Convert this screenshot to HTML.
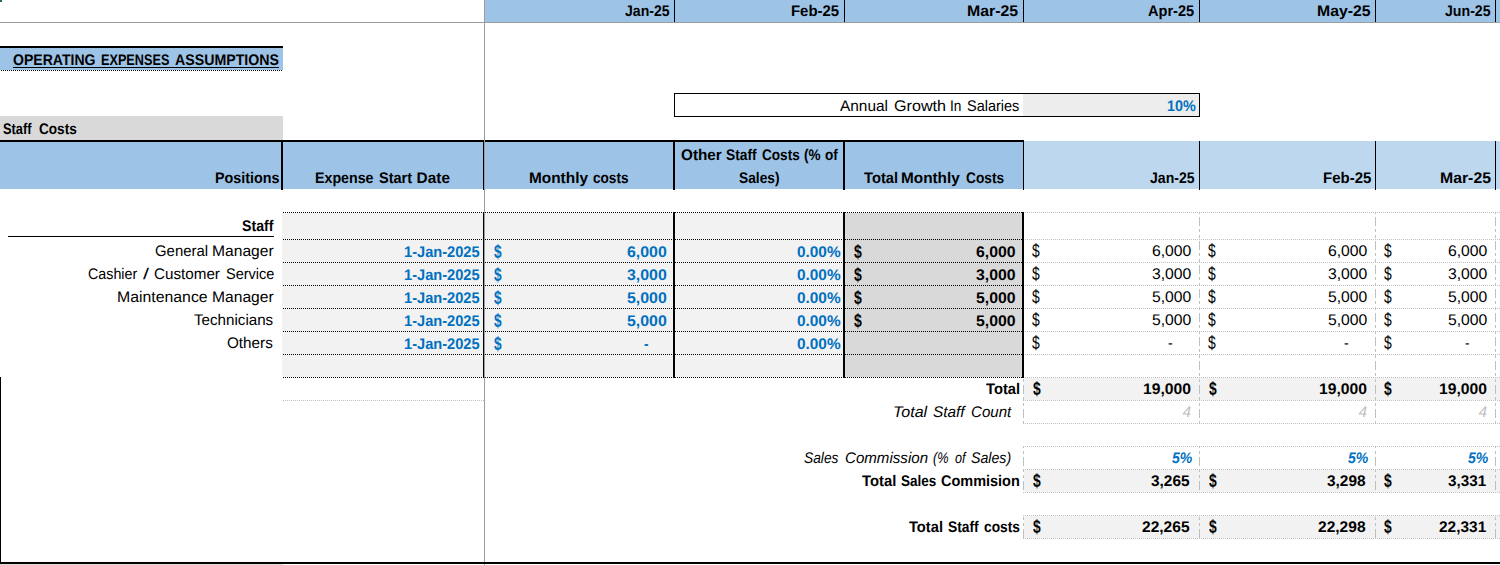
<!DOCTYPE html>
<html lang="en"><head><meta charset="utf-8"><title>Operating Expenses Assumptions</title>
<style>
html,body{margin:0;padding:0;background:#fff}
body{width:1500px;height:565px;position:relative;overflow:hidden;font:15.4px/23px "Liberation Sans", sans-serif;color:#000}
.r{position:absolute}
span{position:absolute;white-space:pre;text-rendering:geometricPrecision;transform-origin:0 16.00px;font-style:normal;font-weight:400}
.b{font-weight:700}.it{font-style:italic}
</style></head><body>
<div class="r" style="left:485px;top:0px;width:1015px;height:22px;background:#9DC3E6"></div>
<div class="r" style="left:0px;top:48px;width:283px;height:22px;background:#9DC3E6"></div>
<div class="r" style="left:0px;top:46px;width:283px;height:2px;background:#000"></div>
<div class="r" style="left:0px;top:116px;width:283px;height:24px;background:#D9D9D9"></div>
<div class="r" style="left:0px;top:142px;width:1024px;height:47px;background:#9DC3E6"></div>
<div class="r" style="left:1024px;top:141px;width:476px;height:48px;background:#BDD7EE"></div>
<div class="r" style="left:0px;top:140px;width:1024px;height:2px;background:#000"></div>
<div class="r" style="left:674px;top:93px;width:526px;height:24px;background:#000"></div>
<div class="r" style="left:675px;top:94px;width:524px;height:22px;background:#fff"></div>
<div class="r" style="left:1023px;top:94px;width:176px;height:22px;background:#EDEDED"></div>
<div class="r" style="left:282px;top:213px;width:561px;height:164px;background:#F2F2F2"></div>
<div class="r" style="left:845px;top:213px;width:177px;height:164px;background:#D9D9D9"></div>
<div class="r" style="left:1024px;top:378px;width:476px;height:22px;background:#F2F2F2"></div>
<div class="r" style="left:1024px;top:470px;width:476px;height:22px;background:#F2F2F2"></div>
<div class="r" style="left:1024px;top:516px;width:476px;height:22px;background:#F2F2F2"></div>
<div class="r" style="left:1px;top:70px;width:282px;height:1px;background:repeating-linear-gradient(90deg,#000 0 1px,transparent 1px 2px)"></div>
<div class="r" style="left:283px;top:212px;width:741px;height:1px;background:repeating-linear-gradient(90deg,#000 0 1px,transparent 1px 2px)"></div>
<div class="r" style="left:1025px;top:212px;width:475px;height:1px;background:repeating-linear-gradient(90deg,#BFBFBF 0 1px,transparent 1px 2px)"></div>
<div class="r" style="left:283px;top:239px;width:741px;height:1px;background:repeating-linear-gradient(90deg,#000 0 1px,transparent 1px 2px)"></div>
<div class="r" style="left:1025px;top:239px;width:475px;height:1px;background:repeating-linear-gradient(90deg,#BFBFBF 0 1px,transparent 1px 2px)"></div>
<div class="r" style="left:283px;top:262px;width:741px;height:1px;background:repeating-linear-gradient(90deg,#000 0 1px,transparent 1px 2px)"></div>
<div class="r" style="left:1025px;top:262px;width:475px;height:1px;background:repeating-linear-gradient(90deg,#BFBFBF 0 1px,transparent 1px 2px)"></div>
<div class="r" style="left:283px;top:285px;width:741px;height:1px;background:repeating-linear-gradient(90deg,#000 0 1px,transparent 1px 2px)"></div>
<div class="r" style="left:1025px;top:285px;width:475px;height:1px;background:repeating-linear-gradient(90deg,#BFBFBF 0 1px,transparent 1px 2px)"></div>
<div class="r" style="left:283px;top:308px;width:741px;height:1px;background:repeating-linear-gradient(90deg,#000 0 1px,transparent 1px 2px)"></div>
<div class="r" style="left:1025px;top:308px;width:475px;height:1px;background:repeating-linear-gradient(90deg,#BFBFBF 0 1px,transparent 1px 2px)"></div>
<div class="r" style="left:283px;top:331px;width:741px;height:1px;background:repeating-linear-gradient(90deg,#000 0 1px,transparent 1px 2px)"></div>
<div class="r" style="left:1025px;top:331px;width:475px;height:1px;background:repeating-linear-gradient(90deg,#BFBFBF 0 1px,transparent 1px 2px)"></div>
<div class="r" style="left:283px;top:354px;width:741px;height:1px;background:repeating-linear-gradient(90deg,#000 0 1px,transparent 1px 2px)"></div>
<div class="r" style="left:1025px;top:354px;width:475px;height:1px;background:repeating-linear-gradient(90deg,#BFBFBF 0 1px,transparent 1px 2px)"></div>
<div class="r" style="left:283px;top:377px;width:741px;height:1px;background:repeating-linear-gradient(90deg,#000 0 1px,transparent 1px 2px)"></div>
<div class="r" style="left:1025px;top:377px;width:475px;height:1px;background:repeating-linear-gradient(90deg,#BFBFBF 0 1px,transparent 1px 2px)"></div>
<div class="r" style="left:1023px;top:400px;width:477px;height:1px;background:repeating-linear-gradient(90deg,#BFBFBF 0 1px,transparent 1px 2px)"></div>
<div class="r" style="left:1023px;top:423px;width:477px;height:1px;background:repeating-linear-gradient(90deg,#BFBFBF 0 1px,transparent 1px 2px)"></div>
<div class="r" style="left:1023px;top:446px;width:477px;height:1px;background:repeating-linear-gradient(90deg,#BFBFBF 0 1px,transparent 1px 2px)"></div>
<div class="r" style="left:1023px;top:469px;width:477px;height:1px;background:repeating-linear-gradient(90deg,#BFBFBF 0 1px,transparent 1px 2px)"></div>
<div class="r" style="left:1023px;top:492px;width:477px;height:1px;background:repeating-linear-gradient(90deg,#BFBFBF 0 1px,transparent 1px 2px)"></div>
<div class="r" style="left:1023px;top:515px;width:477px;height:1px;background:repeating-linear-gradient(90deg,#BFBFBF 0 1px,transparent 1px 2px)"></div>
<div class="r" style="left:1023px;top:538px;width:477px;height:1px;background:repeating-linear-gradient(90deg,#BFBFBF 0 1px,transparent 1px 2px)"></div>
<div class="r" style="left:283px;top:400px;width:201px;height:1px;background:repeating-linear-gradient(90deg,#BFBFBF 0 1px,transparent 1px 2px)"></div>
<div class="r" style="left:1199px;top:212px;width:1px;height:212px;background:linear-gradient(180deg,#BFBFBF 0 9px,transparent 9px 12px,#BFBFBF 12px 15px,transparent 15px 18px,#BFBFBF 18px 21px,transparent 21px 24px) 0 5px/1px 24px repeat-y"></div>
<div class="r" style="left:1199px;top:446px;width:1px;height:47px;background:linear-gradient(180deg,#BFBFBF 0 9px,transparent 9px 12px,#BFBFBF 12px 15px,transparent 15px 18px,#BFBFBF 18px 21px,transparent 21px 24px) 0 11px/1px 24px repeat-y"></div>
<div class="r" style="left:1199px;top:515px;width:1px;height:24px;background:linear-gradient(180deg,#BFBFBF 0 9px,transparent 9px 12px,#BFBFBF 12px 15px,transparent 15px 18px,#BFBFBF 18px 21px,transparent 21px 24px) 0 14px/1px 24px repeat-y"></div>
<div class="r" style="left:1375px;top:212px;width:1px;height:212px;background:linear-gradient(180deg,#BFBFBF 0 9px,transparent 9px 12px,#BFBFBF 12px 15px,transparent 15px 18px,#BFBFBF 18px 21px,transparent 21px 24px) 0 5px/1px 24px repeat-y"></div>
<div class="r" style="left:1375px;top:446px;width:1px;height:47px;background:linear-gradient(180deg,#BFBFBF 0 9px,transparent 9px 12px,#BFBFBF 12px 15px,transparent 15px 18px,#BFBFBF 18px 21px,transparent 21px 24px) 0 11px/1px 24px repeat-y"></div>
<div class="r" style="left:1375px;top:515px;width:1px;height:24px;background:linear-gradient(180deg,#BFBFBF 0 9px,transparent 9px 12px,#BFBFBF 12px 15px,transparent 15px 18px,#BFBFBF 18px 21px,transparent 21px 24px) 0 14px/1px 24px repeat-y"></div>
<div class="r" style="left:1495px;top:212px;width:1px;height:212px;background:linear-gradient(180deg,#BFBFBF 0 9px,transparent 9px 12px,#BFBFBF 12px 15px,transparent 15px 18px,#BFBFBF 18px 21px,transparent 21px 24px) 0 5px/1px 24px repeat-y"></div>
<div class="r" style="left:1495px;top:446px;width:1px;height:47px;background:linear-gradient(180deg,#BFBFBF 0 9px,transparent 9px 12px,#BFBFBF 12px 15px,transparent 15px 18px,#BFBFBF 18px 21px,transparent 21px 24px) 0 11px/1px 24px repeat-y"></div>
<div class="r" style="left:1495px;top:515px;width:1px;height:24px;background:linear-gradient(180deg,#BFBFBF 0 9px,transparent 9px 12px,#BFBFBF 12px 15px,transparent 15px 18px,#BFBFBF 18px 21px,transparent 21px 24px) 0 14px/1px 24px repeat-y"></div>
<div class="r" style="left:1023px;top:377px;width:1px;height:47px;background:linear-gradient(180deg,#BFBFBF 0 9px,transparent 9px 12px,#BFBFBF 12px 15px,transparent 15px 18px,#BFBFBF 18px 21px,transparent 21px 24px) 0 8px/1px 24px repeat-y"></div>
<div class="r" style="left:1023px;top:446px;width:1px;height:47px;background:linear-gradient(180deg,#BFBFBF 0 9px,transparent 9px 12px,#BFBFBF 12px 15px,transparent 15px 18px,#BFBFBF 18px 21px,transparent 21px 24px) 0 11px/1px 24px repeat-y"></div>
<div class="r" style="left:1023px;top:515px;width:1px;height:24px;background:linear-gradient(180deg,#BFBFBF 0 9px,transparent 9px 12px,#BFBFBF 12px 15px,transparent 15px 18px,#BFBFBF 18px 21px,transparent 21px 24px) 0 14px/1px 24px repeat-y"></div>
<div class="r" style="left:674px;top:0px;width:1px;height:22px;background:#000"></div>
<div class="r" style="left:844px;top:0px;width:1px;height:22px;background:#000"></div>
<div class="r" style="left:1023px;top:0px;width:1px;height:22px;background:#000"></div>
<div class="r" style="left:1199px;top:0px;width:1px;height:22px;background:#000"></div>
<div class="r" style="left:1375px;top:0px;width:1px;height:22px;background:#000"></div>
<div class="r" style="left:1495px;top:0px;width:1px;height:22px;background:#000"></div>
<div class="r" style="left:281px;top:141px;width:2px;height:49px;background:#000"></div>
<div class="r" style="left:483px;top:141px;width:1px;height:49px;background:#000"></div>
<div class="r" style="left:673px;top:141px;width:2px;height:49px;background:#000"></div>
<div class="r" style="left:843px;top:141px;width:2px;height:49px;background:#000"></div>
<div class="r" style="left:1023px;top:140px;width:1px;height:50px;background:#000"></div>
<div class="r" style="left:1199px;top:141px;width:1px;height:49px;background:#000"></div>
<div class="r" style="left:1375px;top:141px;width:1px;height:49px;background:#000"></div>
<div class="r" style="left:1495px;top:141px;width:1px;height:49px;background:#000"></div>
<div class="r" style="left:483px;top:212px;width:1px;height:166px;background:#000"></div>
<div class="r" style="left:673px;top:212px;width:2px;height:166px;background:#000"></div>
<div class="r" style="left:843px;top:212px;width:2px;height:166px;background:#000"></div>
<div class="r" style="left:1022px;top:212px;width:2px;height:166px;background:#000"></div>
<div class="r" style="left:0px;top:22px;width:1500px;height:1px;background:#9C9C9C"></div>
<div class="r" style="left:484px;top:0px;width:1px;height:565px;background:#9C9C9C"></div>
<div class="r" style="left:0px;top:562px;width:1500px;height:2px;background:#000"></div>
<div class="r" style="left:0px;top:377px;width:1px;height:187px;background:#000"></div>
<div class="r" style="left:0px;top:564px;width:283px;height:1px;background:#D9D9D9"></div>
<div class="r" style="left:0px;top:0px;width:2px;height:2px;background:#217346"></div>
<div class="r" style="left:13px;top:67px;width:266px;height:1px;background:#000"></div>
<div class="r" style="left:8px;top:236px;width:266px;height:1px;background:#000"></div>
<span class="b" style="left:625.00px;top:0.00px;transform:scaleX(0.9145)">Jan-25</span>
<span class="b" style="left:791.43px;top:0.00px;transform:scaleX(0.9705)">Feb-25</span>
<span class="b" style="left:967.37px;top:0.00px;transform:scaleX(1.0315)">Mar-25</span>
<span class="b" style="left:1148.40px;top:0.00px;transform:scaleX(0.9473)">Apr-25</span>
<span class="b" style="left:1317.37px;top:0.00px;transform:scaleX(1.0266)">May-25</span>
<span class="b" style="left:1445.00px;top:0.00px;transform:scaleX(0.9191)">Jun-25</span>
<span class="b" style="left:13.20px;top:49.00px;transform:scaleX(0.9128)">OPERATING</span>
<span class="b" style="left:101.08px;top:49.00px;transform:scaleX(0.8237)">EXPENSES</span>
<span class="b" style="left:175.00px;top:49.00px;transform:scaleX(0.9209)">ASSUMPTIONS</span>
<span style="left:840.40px;top:95.00px;transform:scaleX(1.0020)">Annual</span>
<span style="left:893.60px;top:95.00px;transform:scaleX(1.0480)">Growth</span>
<span style="left:950.11px;top:95.00px;transform:scaleX(0.8868)">In</span>
<span style="left:967.00px;top:95.00px;transform:scaleX(0.9408)">Salaries</span>
<span class="b" style="left:1167.00px;top:95.00px;transform:scaleX(0.9319);color:#0070C0">10%</span>
<span class="b" style="left:3.00px;top:118.00px;transform:scaleX(0.8325)">Staff</span>
<span class="b" style="left:39.40px;top:118.00px;transform:scaleX(0.8815)">Costs</span>
<span class="b" style="left:214.67px;top:167.00px;transform:scaleX(0.9305)">Positions</span>
<span class="b" style="left:315.08px;top:167.00px;transform:scaleX(0.9244)">Expense</span>
<span class="b" style="left:379.40px;top:167.00px;transform:scaleX(0.9445)">Start</span>
<span class="b" style="left:416.60px;top:167.00px;transform:scaleX(1.0000)">Date</span>
<span class="b" style="left:528.60px;top:167.00px;transform:scaleX(0.9996)">Monthly</span>
<span class="b" style="left:593.40px;top:167.00px;transform:scaleX(0.8828)">costs</span>
<span class="b" style="left:680.60px;top:144.00px;transform:scaleX(0.9937)">Other</span>
<span class="b" style="left:725.80px;top:144.00px;transform:scaleX(0.8952)">Staff</span>
<span class="b" style="left:762.20px;top:144.00px;transform:scaleX(0.8815)">Costs</span>
<span class="b" style="left:804.20px;top:144.00px;transform:scaleX(0.8784)">(%</span>
<span class="b" style="left:825.40px;top:144.00px;transform:scaleX(0.8830)">of</span>
<span class="b" style="left:739.00px;top:167.00px;transform:scaleX(0.8934)">Sales)</span>
<span class="b" style="left:863.60px;top:167.00px;transform:scaleX(0.9563)">Total</span>
<span class="b" style="left:901.40px;top:167.00px;transform:scaleX(0.9961)">Monthly</span>
<span class="b" style="left:966.00px;top:167.00px;transform:scaleX(0.8910)">Costs</span>
<span class="b" style="left:1150.00px;top:167.00px;transform:scaleX(0.9145)">Jan-25</span>
<span class="b" style="left:1322.63px;top:167.00px;transform:scaleX(0.9746)">Feb-25</span>
<span class="b" style="left:1439.57px;top:167.00px;transform:scaleX(1.0274)">Mar-25</span>
<span class="b" style="left:242.00px;top:215.00px;transform:scaleX(0.9209)">Staff</span>
<span style="left:154.80px;top:240.00px;transform:scaleX(0.9681)">General</span>
<span style="left:211.99px;top:240.00px;transform:scaleX(1.0148)">Manager</span>
<span class="b" style="left:404.00px;top:241.00px;transform:scaleX(0.9499);color:#0070C0">1-Jan-2025</span>
<span class="b" style="left:493.60px;top:241.80px;transform:scale(0.8889,1.22);color:#0070C0">$</span>
<span class="b" style="left:626.70px;top:241.00px;transform:scaleX(1.0328);color:#0070C0">6,000</span>
<span class="b" style="left:854.40px;top:241.80px;transform:scale(0.9111,1.22)">$</span>
<span class="b" style="left:975.60px;top:241.00px;transform:scaleX(1.0275)">6,000</span>
<span style="left:1032.20px;top:240.80px;transform:scale(0.9000,1.22)">$</span>
<span style="left:1151.60px;top:240.00px;transform:scaleX(1.0223)">6,000</span>
<span style="left:1208.20px;top:240.80px;transform:scale(0.9000,1.22)">$</span>
<span style="left:1327.60px;top:240.00px;transform:scaleX(1.0223)">6,000</span>
<span style="left:1384.20px;top:240.80px;transform:scale(0.9000,1.22)">$</span>
<span style="left:1447.60px;top:240.00px;transform:scaleX(1.0223)">6,000</span>
<span class="b" style="left:797.30px;top:241.00px;transform:scaleX(0.9988);color:#0070C0">0.00%</span>
<span style="left:87.60px;top:263.00px;transform:scaleX(0.9280)">Cashier</span>
<span style="left:142.60px;top:263.00px;transform:scaleX(1.4000)">/</span>
<span style="left:153.80px;top:263.00px;transform:scaleX(0.9882)">Customer</span>
<span style="left:225.60px;top:263.00px;transform:scaleX(0.9437)">Service</span>
<span class="b" style="left:404.00px;top:264.00px;transform:scaleX(0.9499);color:#0070C0">1-Jan-2025</span>
<span class="b" style="left:493.60px;top:264.80px;transform:scale(0.8889,1.22);color:#0070C0">$</span>
<span class="b" style="left:626.70px;top:264.00px;transform:scaleX(1.0328);color:#0070C0">3,000</span>
<span class="b" style="left:854.40px;top:264.80px;transform:scale(0.9111,1.22)">$</span>
<span class="b" style="left:975.60px;top:264.00px;transform:scaleX(1.0275)">3,000</span>
<span style="left:1032.20px;top:263.80px;transform:scale(0.9000,1.22)">$</span>
<span style="left:1151.60px;top:263.00px;transform:scaleX(1.0223)">3,000</span>
<span style="left:1208.20px;top:263.80px;transform:scale(0.9000,1.22)">$</span>
<span style="left:1327.60px;top:263.00px;transform:scaleX(1.0223)">3,000</span>
<span style="left:1384.20px;top:263.80px;transform:scale(0.9000,1.22)">$</span>
<span style="left:1447.60px;top:263.00px;transform:scaleX(1.0223)">3,000</span>
<span class="b" style="left:797.30px;top:264.00px;transform:scaleX(0.9988);color:#0070C0">0.00%</span>
<span style="left:117.07px;top:286.00px;transform:scaleX(1.0281)">Maintenance</span>
<span style="left:211.99px;top:286.00px;transform:scaleX(1.0148)">Manager</span>
<span class="b" style="left:404.00px;top:287.00px;transform:scaleX(0.9499);color:#0070C0">1-Jan-2025</span>
<span class="b" style="left:493.60px;top:287.80px;transform:scale(0.8889,1.22);color:#0070C0">$</span>
<span class="b" style="left:626.70px;top:287.00px;transform:scaleX(1.0328);color:#0070C0">5,000</span>
<span class="b" style="left:854.40px;top:287.80px;transform:scale(0.9111,1.22)">$</span>
<span class="b" style="left:975.60px;top:287.00px;transform:scaleX(1.0275)">5,000</span>
<span style="left:1032.20px;top:286.80px;transform:scale(0.9000,1.22)">$</span>
<span style="left:1151.60px;top:286.00px;transform:scaleX(1.0223)">5,000</span>
<span style="left:1208.20px;top:286.80px;transform:scale(0.9000,1.22)">$</span>
<span style="left:1327.60px;top:286.00px;transform:scaleX(1.0223)">5,000</span>
<span style="left:1384.20px;top:286.80px;transform:scale(0.9000,1.22)">$</span>
<span style="left:1447.60px;top:286.00px;transform:scaleX(1.0223)">5,000</span>
<span class="b" style="left:797.30px;top:287.00px;transform:scaleX(0.9988);color:#0070C0">0.00%</span>
<span style="left:194.00px;top:309.00px;transform:scaleX(0.9849)">Technicians</span>
<span class="b" style="left:404.00px;top:310.00px;transform:scaleX(0.9499);color:#0070C0">1-Jan-2025</span>
<span class="b" style="left:493.60px;top:310.80px;transform:scale(0.8889,1.22);color:#0070C0">$</span>
<span class="b" style="left:626.70px;top:310.00px;transform:scaleX(1.0328);color:#0070C0">5,000</span>
<span class="b" style="left:854.40px;top:310.80px;transform:scale(0.9111,1.22)">$</span>
<span class="b" style="left:975.60px;top:310.00px;transform:scaleX(1.0275)">5,000</span>
<span style="left:1032.20px;top:309.80px;transform:scale(0.9000,1.22)">$</span>
<span style="left:1151.60px;top:309.00px;transform:scaleX(1.0223)">5,000</span>
<span style="left:1208.20px;top:309.80px;transform:scale(0.9000,1.22)">$</span>
<span style="left:1327.60px;top:309.00px;transform:scaleX(1.0223)">5,000</span>
<span style="left:1384.20px;top:309.80px;transform:scale(0.9000,1.22)">$</span>
<span style="left:1447.60px;top:309.00px;transform:scaleX(1.0223)">5,000</span>
<span class="b" style="left:797.30px;top:310.00px;transform:scaleX(0.9988);color:#0070C0">0.00%</span>
<span style="left:227.40px;top:332.00px;transform:scaleX(0.9916)">Others</span>
<span class="b" style="left:404.00px;top:333.00px;transform:scaleX(0.9499);color:#0070C0">1-Jan-2025</span>
<span class="b" style="left:494.40px;top:333.80px;transform:scale(0.8889,1.22);color:#0070C0">$</span>
<span class="b" style="left:643.60px;top:333.00px;transform:scaleX(0.8800);color:#0070C0">-</span>
<span style="left:1032.20px;top:332.80px;transform:scale(0.9000,1.22)">$</span>
<span style="left:1168.20px;top:332.00px;transform:scaleX(0.9200)">-</span>
<span style="left:1208.20px;top:332.80px;transform:scale(0.9000,1.22)">$</span>
<span style="left:1344.20px;top:332.00px;transform:scaleX(0.9200)">-</span>
<span style="left:1384.20px;top:332.80px;transform:scale(0.9000,1.22)">$</span>
<span style="left:1464.60px;top:332.00px;transform:scaleX(0.8800)">-</span>
<span class="b" style="left:797.30px;top:333.00px;transform:scaleX(0.9988);color:#0070C0">0.00%</span>
<span class="b" style="left:985.60px;top:378.00px;transform:scaleX(0.9563)">Total</span>
<span class="b" style="left:1032.70px;top:378.80px;transform:scale(0.9000,1.22)">$</span>
<span class="b" style="left:1143.00px;top:378.00px;transform:scaleX(1.0190)">19,000</span>
<span class="b" style="left:1208.60px;top:378.80px;transform:scale(0.9000,1.22)">$</span>
<span class="b" style="left:1319.00px;top:378.00px;transform:scaleX(1.0190)">19,000</span>
<span class="b" style="left:1384.30px;top:378.80px;transform:scale(0.9000,1.22)">$</span>
<span class="b" style="left:1438.90px;top:378.00px;transform:scaleX(1.0190)">19,000</span>
<span class="b" style="left:862.40px;top:470.00px;transform:scaleX(0.9620)">Total</span>
<span class="b" style="left:901.10px;top:470.00px;transform:scaleX(0.8774)">Sales</span>
<span class="b" style="left:941.00px;top:470.00px;transform:scaleX(0.9401)">Commision</span>
<span class="b" style="left:1032.70px;top:470.80px;transform:scale(0.9000,1.22)">$</span>
<span class="b" style="left:1151.40px;top:470.00px;transform:scaleX(1.0012)">3,265</span>
<span class="b" style="left:1208.60px;top:470.80px;transform:scale(0.9000,1.22)">$</span>
<span class="b" style="left:1327.40px;top:470.00px;transform:scaleX(1.0012)">3,298</span>
<span class="b" style="left:1384.30px;top:470.80px;transform:scale(0.9000,1.22)">$</span>
<span class="b" style="left:1447.70px;top:470.00px;transform:scaleX(0.9909)">3,331</span>
<span class="b" style="left:909.20px;top:516.00px;transform:scaleX(0.9535)">Total</span>
<span class="b" style="left:947.80px;top:516.00px;transform:scaleX(0.8981)">Staff</span>
<span class="b" style="left:984.00px;top:516.00px;transform:scaleX(0.8929)">costs</span>
<span class="b" style="left:1032.70px;top:516.80px;transform:scale(0.9000,1.22)">$</span>
<span class="b" style="left:1142.40px;top:516.00px;transform:scaleX(1.0102)">22,265</span>
<span class="b" style="left:1208.60px;top:516.80px;transform:scale(0.9000,1.22)">$</span>
<span class="b" style="left:1318.40px;top:516.00px;transform:scaleX(1.0102)">22,298</span>
<span class="b" style="left:1384.30px;top:516.80px;transform:scale(0.9000,1.22)">$</span>
<span class="b" style="left:1438.60px;top:516.00px;transform:scaleX(1.0039)">22,331</span>
<span class="it" style="left:893.26px;top:401.00px;transform:scaleX(1.0407)">Total</span>
<span class="it" style="left:933.10px;top:401.00px;transform:scaleX(0.9977)">Staff</span>
<span class="it" style="left:970.50px;top:401.00px;transform:scaleX(0.9786)">Count</span>
<span class="it" style="left:1182.40px;top:401.00px;transform:scaleX(1.0000);color:#BFBFBF">4</span>
<span class="it" style="left:1358.40px;top:401.00px;transform:scaleX(1.0000);color:#BFBFBF">4</span>
<span class="it" style="left:1478.40px;top:401.00px;transform:scaleX(1.0000);color:#BFBFBF">4</span>
<span class="it" style="left:804.40px;top:447.00px;transform:scaleX(0.8942)">Sales</span>
<span class="it" style="left:844.50px;top:447.00px;transform:scaleX(0.9809)">Commission</span>
<span class="it" style="left:932.60px;top:447.00px;transform:scaleX(0.8261)">(%</span>
<span class="it" style="left:954.50px;top:447.00px;transform:scaleX(0.8173)">of</span>
<span class="it" style="left:971.40px;top:447.00px;transform:scaleX(0.9196)">Sales)</span>
<span class="b it" style="left:1172.40px;top:447.00px;transform:scaleX(0.9131);color:#0070C0">5%</span>
<span class="b it" style="left:1348.40px;top:447.00px;transform:scaleX(0.9131);color:#0070C0">5%</span>
<span class="b it" style="left:1468.40px;top:447.00px;transform:scaleX(0.9131);color:#0070C0">5%</span>
</body></html>
